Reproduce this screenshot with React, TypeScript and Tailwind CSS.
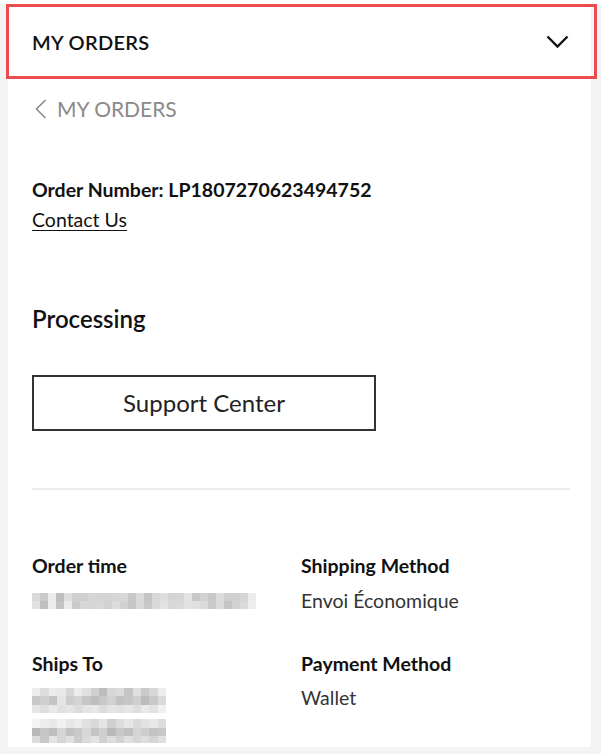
import React from 'react';

// pixelated placeholder colours for blurred personal data
const orderTimeCells = [
  ['#d9d9d9', '#c9c9c9', '#ececec', '#bdbdbd', '#dedede', '#d0d0d0', '#cfcfcf', '#d6d6d6', '#d3d3d3', '#d4d4d4', '#d6d6d6', '#d7d7d7', '#c7c7c7', '#dadada', '#c4c4c4', '#d8d8d8', '#dedede', '#d4d4d4', '#d5d5d5', '#e4e4e4', '#c8c8c8', '#d1d1d1', '#c7c7c7', '#dcdcdc', '#cfcfcf', '#d0d0d0', '#d5d5d5', '#ececec'],
  ['#e2e2e2', '#bfbfbf', '#ececec', '#c4c4c4', '#eaeaea', '#cbcbcb', '#d7d7d7', '#d6d6d6', '#d7d7d7', '#d1d1d1', '#dcdcdc', '#d2d2d2', '#c5c5c5', '#d8d8d8', '#c8c8c8', '#dadada', '#e2e2e2', '#d7d7d7', '#d9d9d9', '#e2e2e2', '#e0e0e0', '#dadada', '#c9c9c9', '#dbdbdb', '#c5c5c5', '#d3d3d3', '#dadada', '#eeeeee'],
];

const shipsCells = [
  ['#ececec', '#dcdcdc', '#ececec', '#e9e9e9', '#d6d6d6', '#ececec', '#e0e0e0', '#cfcfcf', '#bdbdbd', '#d7d7d7', '#dcdcdc', '#c5c5c5', '#e0e0e0', '#cacaca', '#d8d8d8', '#ececec'],
  ['#c7c7c7', '#cfcfcf', '#c4c4c4', '#e5e5e5', '#cdcdcd', '#d3d3d3', '#c6c6c6', '#bebebe', '#c8c8c8', '#d2d2d2', '#c2c2c2', '#c6c6c6', '#d0d0d0', '#bcbcbc', '#c9c9c9', '#dadada'],
  ['#e6e6e6', '#dedede', '#eaeaea', '#e0e0e0', '#e5e5e5', '#dcdcdc', '#e4e4e4', '#e8e8e8', '#dcdcdc', '#e5e5e5', '#e2e2e2', '#e6e6e6', '#dddddd', '#eaeaea', '#e3e3e3', '#f0f0f0'],
];

const shipsCells2 = [
  ['#f4f4f4', '#ededed', '#e8e8e8', '#f0f0f0', '#e6e6e6', '#ececec', '#e0e0e0', '#d8d8d8', '#e4e4e4', '#cfcfcf', '#dcdcdc', '#e6e6e6', '#dadada', '#e2e2e2', '#e8e8e8', '#dcdcdc'],
  ['#b8b8b8', '#c6c6c6', '#bdbdbd', '#d5d5d5', '#c2c2c2', '#c9c9c9', '#d8d8d8', '#c4c4c4', '#cfcfcf', '#b9b9b9', '#c8c8c8', '#c1c1c1', '#d5d5d5', '#cecece', '#c3c3c3', '#c8c8c8'],
  ['#dcdcdc', '#c8c8c8', '#e4e4e4', '#d6d6d6', '#e0e0e0', '#cccccc', '#dadada', '#e2e2e2', '#d0d0d0', '#dcdcdc', '#d2d2d2', '#e0e0e0', '#d6d6d6', '#dedede', '#d4d4d4', '#e0e0e0'],
];

function Pixelated({ rows, cell }: { rows: string[][]; cell: number }) {
  return (
    <div className="flex flex-col">
      {rows.map((row, i) => (
        <div key={i} className="flex">
          {row.map((c, j) => (
            <div key={j} style={{ background: c, width: cell, height: cell }} />
          ))}
        </div>
      ))}
    </div>
  );
}

export default function App() {
  return (
    <div
      className="min-h-screen bg-[#f4f4f4] pl-[8px] pr-[10px] pb-[11px] text-[#111]"
      style={{ fontFamily: 'Lato, "Noto Sans", sans-serif' }}
    >
      <div className="bg-white pr-[21px] h-[743px]">
        {/* Header (highlighted) */}
        <div className="mt-[4px] -ml-[2px] -mr-[27px] h-[75px] border-[3px] border-[#ea4c50] flex items-center justify-between pl-[23px] pr-[25px]">
          <span className="text-[20px] font-semibold tracking-[0.3px]">MY ORDERS</span>
          <svg width="23" height="14" viewBox="0 0 23 14" fill="none">
            <path d="M1.5 1.5 L11.5 11.5 L21.5 1.5" stroke="#111" strokeWidth="2.4" />
          </svg>
        </div>

        <div className="pl-[24px]">
          {/* Back link */}
          <div className="mt-[18px] flex items-center gap-[10px] text-[#8a8a8a] h-[24px] pl-[3px]">
            <svg width="12" height="20" viewBox="0 0 12 20" fill="none">
              <path d="M10.5 1 L1.5 10 L10.5 19" stroke="#8a8a8a" strokeWidth="1.6" />
            </svg>
            <span className="text-[21px]">MY ORDERS</span>
          </div>

          {/* Order info */}
          <div className="mt-[54px] text-[19.5px] leading-[30px]">
            <div className="font-bold">Order Number: LP1807270623494752</div>
            <a className="underline underline-offset-[3px]">Contact Us</a>
          </div>

          <div className="mt-[69px] text-[24px] leading-[30px] font-semibold">Processing</div>

          <button className="mt-[41px] w-[344px] h-[56px] border-2 border-[#333] text-[24px] text-[#222] flex items-center justify-center">
            Support Center
          </button>

          <div className="mt-[57px] h-[2px] bg-[#ececec]" />

          {/* Details grid */}
          <div className="mt-[64px] grid grid-cols-[269px_1fr] text-[19.5px] leading-[24px]">
            <div>
              <div className="font-bold">Order time</div>
              <div className="mt-[15px]">
                <Pixelated rows={orderTimeCells} cell={8} />
              </div>
            </div>
            <div>
              <div className="font-bold">Shipping Method</div>
              <div className="mt-[11px] text-[#333]">Envoi Économique</div>
            </div>

            <div className="mt-[39px]">
              <div className="font-bold">Ships To</div>
              <div className="mt-[12px] w-[134px] h-[55px] overflow-hidden">
                <Pixelated rows={shipsCells} cell={8.4} />
                <div className="mt-[6px]">
                  <Pixelated rows={shipsCells2} cell={8.4} />
                </div>
              </div>
            </div>
            <div className="mt-[39px]">
              <div className="font-bold">Payment Method</div>
              <div className="mt-[10px] text-[#333]">Wallet</div>
            </div>
          </div>
        </div>
      </div>
    </div>
  );
}
